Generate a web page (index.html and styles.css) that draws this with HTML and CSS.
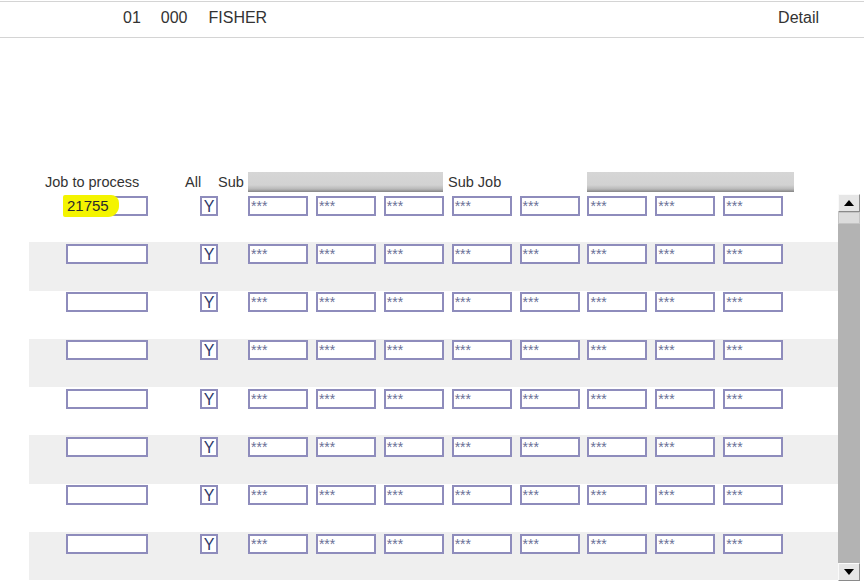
FILE: index.html
```html
<!DOCTYPE html>
<html>
<head>
<meta charset="utf-8">
<link rel="stylesheet" href="styles.css">
</head>
<body>
<div class="topbar">
  <span class="code c1">01</span>
  <span class="code c2">000</span>
  <span class="code c3">FISHER</span>
  <span class="detail">Detail</span>
</div>

<div class="panel">
  <div class="colheads">
    <span class="h-job">Job to process</span>
    <span class="h-all">All</span>
    <span class="h-sub">Sub</span>
    <span class="bar bar1"></span>
    <span class="h-subjob">Sub Job</span>
    <span class="bar bar2"></span>
  </div>

  <div class="body">
    <div class="rows" id="rows"></div>
    <div class="scrollbar">
      <div class="sbtn"><svg width="10" height="6" viewBox="0 0 10 6"><path d="M0 6 L5 0 L10 6 Z" fill="#000"/></svg></div>
      <div class="thumb"></div>
      <div class="track"></div>
      <div class="sbtn"><svg width="10" height="6" viewBox="0 0 10 6"><path d="M0 0 L5 6 L10 0 Z" fill="#000"/></svg></div>
    </div>
  </div>
</div>

<script>
  const rows = document.getElementById('rows');
  for (let r = 0; r < 8; r++) {
    const row = document.createElement('div');
    row.className = 'row' + (r % 2 ? ' alt' : '');
    let html = '<div class="job">' + (r === 0 ? '<span class="hl">21755</span>' : '') + '</div>';
    html += '<div class="yes">Y</div>';
    html += '<div class="subs">';
    for (let i = 0; i < 8; i++) html += '<div class="sub">***</div>';
    html += '</div>';
    row.innerHTML = html;
    rows.appendChild(row);
  }
</script>
</body>
</html>
```

FILE: styles.css
```css
html, body {
  margin: 0;
  padding: 0;
  background: #fff;
  font-family: "Liberation Sans", Arial, sans-serif;
  color: #333;
}

.topbar {
  margin-top: 1px;
  height: 37px;
  padding-bottom: 4px;
  box-sizing: border-box;
  border-top: 1px solid #d4d4d4;
  border-bottom: 1px solid #d4d4d4;
  display: flex;
  align-items: center;
  font-size: 16px;
}
.c1 { margin-left: 123px; }
.c2 { margin-left: 20px; }
.c3 { margin-left: 21px; }
.detail { margin-left: auto; margin-right: 45px; }

.panel {
  margin-top: 134px;
}

.colheads {
  display: flex;
  align-items: center;
  height: 20px;
  font-size: 14.5px;
  padding-left: 45px;
}
.h-job { width: 140px; }
.h-all { width: 33px; }
.h-sub { width: 30px; }
.bar {
  height: 20px;
  background: linear-gradient(#d6d6d6 0%, #d2d2d2 65%, #b8b8b8 85%, #858585 100%);
}
.bar1 { width: 195px; }
.h-subjob { width: 139px; margin-left: 5px; }
.bar2 { width: 207px; }

.body {
  display: flex;
  margin-top: 2px;
}
.rows {
  margin-left: 29px;
  width: 809px;
}
.row {
  height: 48.3px;
  display: flex;
  align-items: flex-start;
  padding-left: 37px;
  box-sizing: border-box;
  padding-top: 1.5px;
}
.row.alt { background: #efefef; }

.job, .yes, .sub {
  box-sizing: border-box;
  height: 20px;
  border: 2px solid #8e8cbc;
  background: #fff;
}
.job {
  width: 82px;
  position: relative;
}
.hl {
  position: absolute;
  left: -5px;
  top: -3px;
  width: 56px;
  height: 22px;
  background: #f4f400;
  border-radius: 2px 8px 11px 2px;
  font-size: 15px;
  line-height: 22px;
  padding-left: 4px;
  box-sizing: border-box;
  color: #2a2a2a;
}
.yes {
  width: 18px;
  margin-left: 52px;
  font-size: 16px;
  line-height: 17px;
  text-align: center;
  color: #2e3a6a;
}
.subs {
  display: flex;
  gap: 7.9px;
  margin-left: 30px;
}
.sub {
  width: 60px;
  font-size: 14px;
  line-height: 16px;
  padding-left: 1px;
  color: #6a7096;
}

.scrollbar {
  width: 22px;
  height: 387px;
  display: flex;
  flex-direction: column;
  background: #b3b3b3;
}
.sbtn {
  height: 18px;
  box-sizing: border-box;
  background: #e6e6e6;
  border-top: 1px solid #fafafa;
  border-left: 1px solid #fafafa;
  border-right: 1px solid #8a8a8a;
  border-bottom: 1px solid #8a8a8a;
  display: flex;
  align-items: center;
  justify-content: center;
}
.thumb {
  height: 12px;
  background: #dcdcdc;
  border: 1px solid #c4c4c4;
  box-sizing: border-box;
}
.track { flex: 1; }
```
